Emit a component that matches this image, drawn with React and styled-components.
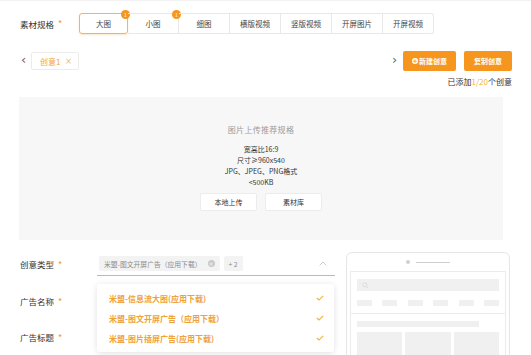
import React from 'react'
import styled, { createGlobalStyle } from 'styled-components'

const GlobalStyle = createGlobalStyle`
    html, body {
        margin: 0;
        padding: 0;
        background: #ffffff;
        overflow: hidden;
        height: 355px;
    }
    * {
        box-sizing: border-box;
    }
    body {
        font-family: "Noto Sans CJK SC", "Noto Sans", "Liberation Sans", sans-serif;
        color: #333;
    }
`

const ORANGE = '#f7961e'

const tabs = [
    { name: '大图', badge: true, active: true },
    { name: '小图', badge: true },
    { name: '细图' },
    { name: '横版视频' },
    { name: '竖版视频' },
    { name: '开屏图片' },
    { name: '开屏视频' },
]

const options = [
    '米盟-信息流大图(应用下载)',
    '米盟-图文开屏广告（应用下载）',
    '米盟-图片插屏广告(应用下载)',
]

function Check() {
    return (
        <svg width="8" height="6" viewBox="0 0 8 6">
            <path d="M0.8 3 L3 5 L7.2 0.8" fill="none" stroke="#f0b44a" strokeWidth="1.2" />
        </svg>
    )
}

function Phone() {
    return (
        <PhoneFrame>
            <PhoneTop>
                <Camera />
                <Speaker />
            </PhoneTop>
            <Screen>
                <SearchBar>
                    <svg width="7" height="7" viewBox="0 0 8 8">
                        <circle cx="3.3" cy="3.3" r="2.4" fill="none" stroke="#d6d6d6" strokeWidth="0.9" />
                        <path d="M5.1 5.1 L7.2 7.2" stroke="#d6d6d6" strokeWidth="0.9" />
                    </svg>
                </SearchBar>
                <ChipRow>
                    {[0, 1, 2, 3, 4, 5].map(i => <Chip key={i} />)}
                </ChipRow>
                <Feed>
                    <FeedTitle />
                    <Thumbs>
                        <Thumb />
                        <Thumb />
                        <Thumb />
                    </Thumbs>
                </Feed>
            </Screen>
        </PhoneFrame>
    )
}

function App() {
    return (
        <Page>
            <GlobalStyle />
            <SpecRow>
                <Label>素材规格<Star>*</Star></Label>
                <Tabs>
                    {tabs.map(t => (
                        <Tab key={t.name} $active={t.active}>
                            {t.name}
                            {t.badge && <Badge>1</Badge>}
                        </Tab>
                    ))}
                </Tabs>
            </SpecRow>

            <CreativeBar>
                <Left>
                    <Arrow>‹</Arrow>
                    <CreativeTag>创意1<Close>×</Close></CreativeTag>
                </Left>
                <Right>
                    <Arrow>›</Arrow>
                    <OrangeButton><PlusDot>+</PlusDot>新建创意</OrangeButton>
                    <OrangeButton $narrow>复制创意</OrangeButton>
                </Right>
            </CreativeBar>
            <AddedHint>已添加<em>1/20</em>个创意</AddedHint>

            <UploadBox>
                <UploadTitle>图片上传推荐规格</UploadTitle>
                <SpecList>
                    <span>宽高比16:9</span>
                    <span>尺寸≥960x540</span>
                    <span>JPG、JPEG、PNG格式</span>
                    <span>&lt;500KB</span>
                </SpecList>
                <UploadActions>
                    <GhostButton>本地上传</GhostButton>
                    <GhostButton>素材库</GhostButton>
                </UploadActions>
            </UploadBox>

            <FormArea>
                <Form>
                    <FormRow>
                        <Label $wide>创意类型<Star>*</Star></Label>
                        <SelectBox>
                            <SelectTag>米盟-图文开屏广告（应用下载）<TagClose>×</TagClose></SelectTag>
                            <SelectTag>+ 2</SelectTag>
                            <Caret>
                                <svg width="8" height="5" viewBox="0 0 8 5">
                                    <path d="M0.6 4.4 L4 1 L7.4 4.4" fill="none" stroke="#c8c8c8" strokeWidth="0.9" />
                                </svg>
                            </Caret>
                            <Dropdown>
                                {options.map(o => (
                                    <Option key={o}>
                                        {o}
                                        <Check />
                                    </Option>
                                ))}
                            </Dropdown>
                        </SelectBox>
                    </FormRow>
                    <FormRow>
                        <Label $wide>广告名称<Star>*</Star></Label>
                    </FormRow>
                    <FormRow>
                        <Label $wide>广告标题<Star>*</Star></Label>
                    </FormRow>
                    <HintLine>
                        <span>请输入广告标题</span>
                        <Dashes><i /><i /><i /><i /></Dashes>
                    </HintLine>
                </Form>
                <Phone />
            </FormArea>
        </Page>
    )
}

export default App

const Page = styled.div`
    width: 531px;
    padding: 12px 19px 0 19px;
    display: flex;
    flex-direction: column;
    border-top: 1px solid #f2f2f2;

    & > * {
        flex-shrink: 0;
    }
`

const SpecRow = styled.div`
    display: flex;
    align-items: center;
    height: 21px;
`

const Label = styled.div`
    width: ${p => (p.$wide ? '78px' : '60px')};
    flex-shrink: 0;
    font-size: 8.5px;
    color: #333;
    padding-left: 1px;
    display: flex;
    align-items: center;
`

const Star = styled.span`
    color: ${ORANGE};
    margin-left: 4px;
    font-size: 9px;
`

const Tabs = styled.div`
    display: flex;
`

const Tab = styled.div`
    position: relative;
    width: ${p => (p.$active ? '49px' : '51px')};
    height: 21px;
    display: flex;
    align-items: center;
    justify-content: center;
    font-size: 7.5px;
    color: #444;
    border: 1px solid ${p => (p.$active ? '#f5b35c' : '#e8e8e8')};
    border-left: ${p => (p.$active ? '1px solid #f5b35c' : 'none')};
    border-radius: ${p => (p.$active ? '3px' : '0')};
    box-shadow: ${p => (p.$active ? '0 1px 2px rgba(245, 150, 30, 0.25)' : 'none')};
    &:last-child {
        border-radius: 0 3px 3px 0;
    }
`

const Badge = styled.span`
    position: absolute;
    top: -4px;
    right: -3px;
    width: 9px;
    height: 9px;
    border-radius: 50%;
    background: ${ORANGE};
    color: #fff;
    font-size: 5px;
    line-height: 9px;
    text-align: center;
`

const CreativeBar = styled.div`
    margin-top: 17px;
    display: flex;
    justify-content: space-between;
    align-items: center;
    height: 20px;
`

const Left = styled.div`
    display: flex;
    align-items: center;
`

const Right = styled.div`
    display: flex;
    align-items: center;
`

const Arrow = styled.span`
    font-family: "DejaVu Sans", sans-serif;
    font-size: 13px;
    color: #666;
    width: 10px;
    line-height: 1;
    margin-top: -3px;
    margin-left: 2px;
`

const CreativeTag = styled.div`
    width: 48px;
    height: 18px;
    border: 1px solid #ececec;
    border-radius: 2px;
    display: flex;
    align-items: center;
    justify-content: space-between;
    padding: 0 6px 0 8px;
    font-size: 8px;
    color: #f0a53a;
`

const Close = styled.span`
    font-family: "DejaVu Sans", sans-serif;
    font-size: 8px;
    color: #f3b465;
`

const OrangeButton = styled.div`
    width: ${p => (p.$narrow ? '48px' : '53px')};
    height: 20px;
    margin-left: ${p => (p.$narrow ? '8px' : '1px')};
    background: ${ORANGE};
    border-radius: 2px;
    color: #fff;
    font-size: 7px;
    font-weight: 700;
    display: flex;
    align-items: center;
    justify-content: center;
`

const PlusDot = styled.span`
    width: 6px;
    height: 6px;
    border-radius: 50%;
    background: #fff;
    color: ${ORANGE};
    font-size: 6px;
    line-height: 6px;
    text-align: center;
    margin-right: 1px;
    font-family: "DejaVu Sans", sans-serif;
`

const AddedHint = styled.div`
    margin-top: 5px;
    text-align: right;
    font-size: 8px;
    color: #333;
    line-height: 11px;

    em {
        font-style: normal;
        color: #f5b820;
    }
`

const UploadBox = styled.div`
    margin-top: 10px;
    width: 484px;
    height: 143px;
    background: #f7f7f7;
    display: flex;
    flex-direction: column;
    align-items: center;
    padding-top: 27px;
`

const UploadTitle = styled.div`
    font-size: 8px;
    color: #9a9a9a;
    letter-spacing: 0.3px;
`

const SpecList = styled.div`
    margin-top: 9px;
    display: flex;
    flex-direction: column;
    align-items: center;
    font-size: 7px;
    line-height: 11px;
    color: #333;
`

const UploadActions = styled.div`
    margin-top: 5px;
    display: flex;
    gap: 8px;
`

const GhostButton = styled.div`
    width: 57px;
    height: 18px;
    background: #fff;
    border: 1px solid #ececec;
    border-radius: 2px;
    display: flex;
    align-items: center;
    justify-content: center;
    font-size: 7px;
    color: #333;
`

const FormArea = styled.div`
    margin-top: 12px;
    display: flex;
    gap: 11px;
`

const Form = styled.div`
    width: 316px;
    display: flex;
    flex-direction: column;
`

const FormRow = styled.div`
    position: relative;
    display: flex;
    align-items: center;
    height: 24px;
    margin-bottom: 12px;
    &:first-child {
        margin-bottom: 13px;
    }
`

const SelectBox = styled.div`
    position: relative;
    flex: 1;
    height: 24px;
    border-bottom: 1px solid #f5b14e;
    display: flex;
    align-items: center;
    gap: 4px;
    padding: 0 2px;
`

const SelectTag = styled.div`
    height: 15px;
    padding: 0 5px;
    background: #f3f3f3;
    border-radius: 2px;
    display: flex;
    align-items: center;
    font-size: 6.8px;
    color: #8c8c8c;
`

const TagClose = styled.span`
    width: 7px;
    height: 7px;
    border-radius: 50%;
    background: #c9c9c9;
    color: #f3f3f3;
    font-size: 6px;
    line-height: 7px;
    text-align: center;
    margin-left: 6px;
    font-family: "DejaVu Sans", sans-serif;
`

const Caret = styled.span`
    margin-left: auto;
    margin-right: 6px;
    display: flex;
`

const Dropdown = styled.div`
    position: absolute;
    top: 32px;
    left: 0;
    width: 237px;
    background: #fff;
    border-radius: 3px;
    box-shadow: 0 1px 6px rgba(0, 0, 0, 0.12);
    padding: 4px 0;
    z-index: 5;
`

const Option = styled.div`
    height: 20px;
    display: flex;
    align-items: center;
    justify-content: space-between;
    padding: 0 10px 0 12px;
    font-size: 8px;
    font-weight: 700;
    color: #f0a23a;
`

const HintLine = styled.div`
    display: flex;
    align-items: center;
    justify-content: space-between;
    padding-left: 78px;
    font-size: 7px;
    color: #999;
`

const Dashes = styled.div`
    display: flex;
    gap: 5px;
    i {
        width: 14px;
        height: 3px;
        background: #f7c27a;
    }
`

const PhoneFrame = styled.div`
    width: 164px;
    height: 130px;
    border: 1px solid #e6e6e6;
    border-radius: 6px;
    padding: 0 3px;
    display: flex;
    flex-direction: column;
`

const PhoneTop = styled.div`
    height: 18px;
    display: flex;
    align-items: center;
    justify-content: center;
    gap: 6px;
`

const Camera = styled.span`
    width: 4px;
    height: 4px;
    border-radius: 50%;
    background: #cfcfcf;
`

const Speaker = styled.span`
    width: 34px;
    height: 1px;
    background: #cfcfcf;
`

const Screen = styled.div`
    flex: 1;
    border: 1px solid #ececec;
    border-bottom: none;
    padding: 7px 6px 0 6px;
    display: flex;
    flex-direction: column;
`

const SearchBar = styled.div`
    height: 12px;
    background: #f0f0f0;
    display: flex;
    align-items: center;
    padding-left: 5px;
`

const ChipRow = styled.div`
    margin-top: 9px;
    display: flex;
    justify-content: space-between;
`

const Chip = styled.span`
    width: 15px;
    height: 6px;
    background: #f0f0f0;
`

const Feed = styled.div`
    margin: 7px -6px 0 -6px;
    border-top: 1px solid #ececec;
    padding: 7px 6px 0 6px;
`

const FeedTitle = styled.div`
    width: 122px;
    height: 6px;
    background: #f0f0f0;
`

const Thumbs = styled.div`
    margin-top: 5px;
    display: grid;
    grid-template-columns: repeat(3, 1fr);
    gap: 3px;
`

const Thumb = styled.div`
    height: 30px;
    background: #f0f0f0;
`
